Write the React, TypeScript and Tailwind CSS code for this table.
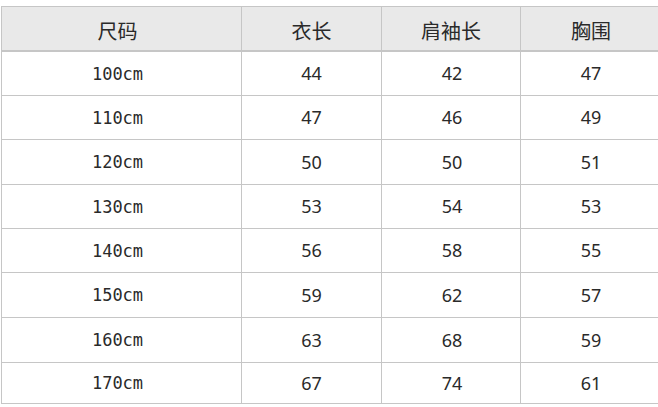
const rows = [
  { size: '100cm', length: '44', sleeve: '42', chest: '47', h: 'h-[44px]' },
  { size: '110cm', length: '47', sleeve: '46', chest: '49', h: 'h-[44px]' },
  { size: '120cm', length: '50', sleeve: '50', chest: '51', h: 'h-[45px]' },
  { size: '130cm', length: '53', sleeve: '54', chest: '53', h: 'h-[44px]' },
  { size: '140cm', length: '56', sleeve: '58', chest: '55', h: 'h-[44px]' },
  { size: '150cm', length: '59', sleeve: '62', chest: '57', h: 'h-[45px]' },
  { size: '160cm', length: '63', sleeve: '68', chest: '59', h: 'h-[45px]' },
  { size: '170cm', length: '67', sleeve: '74', chest: '61', h: 'h-[41px]' },
];

const cols = 'grid grid-cols-[240px_140px_139px_140px]';

export default function App() {
  return (
    <div className="w-[658px] h-[407px] overflow-hidden bg-white pt-[6px] text-[#2a2a2a]">
      <div className="ml-[1px] w-[661px] border-l border-[#c6c6c6]">
        <div
          className={`${cols} h-[46px] border-t border-b-2 border-[#c6c6c6] bg-[#e9e9e9] text-[20px] font-['Noto_Sans_CJK_SC',sans-serif]`}
        >
          <div className="flex items-center justify-center pt-[4px] pr-[8px] border-r border-[#c6c6c6]">尺码</div>
          <div className="flex items-center justify-center pt-[4px] border-r border-[#c6c6c6]">衣长</div>
          <div className="flex items-center justify-center pt-[4px] border-r border-[#c6c6c6]">肩袖长</div>
          <div className="flex items-center justify-center pt-[4px]">胸围</div>
        </div>
        {rows.map((r) => (
          <div key={r.size} className={`${cols} ${r.h} border-b border-[#c6c6c6] text-[18px]`}>
            <div className="flex items-center justify-center pt-[2px] pr-[8px] border-r border-[#c6c6c6] font-['DejaVu_Sans_Mono',monospace] text-[17px]">
              {r.size}
            </div>
            <div className="flex items-center justify-center border-r border-[#c6c6c6] font-['Noto_Sans',sans-serif]">
              {r.length}
            </div>
            <div className="flex items-center justify-center pl-[2px] border-r border-[#c6c6c6] font-['Noto_Sans',sans-serif]">
              {r.sleeve}
            </div>
            <div className="flex items-center justify-center font-['Noto_Sans',sans-serif]">{r.chest}</div>
          </div>
        ))}
      </div>
    </div>
  );
}
